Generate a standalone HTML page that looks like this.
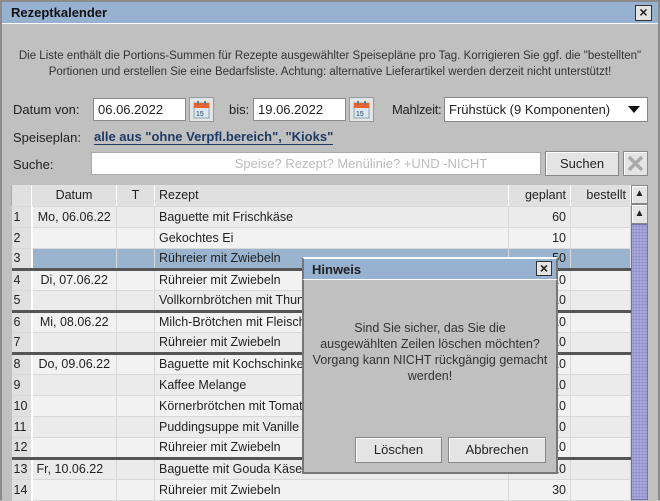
<!DOCTYPE html>
<html><head><meta charset="utf-8"><style>
*{box-sizing:border-box;margin:0;padding:0}
body{width:660px;height:500px;overflow:hidden;background:#c0c0c0;font-family:"Liberation Sans",sans-serif;font-size:13px;color:#222;position:relative}
.a{position:absolute}
.win{left:0;top:0;width:660px;height:500px;border:2px solid #8a8a8a;border-bottom:none}
.title{left:2px;top:2px;width:656px;height:22px;background:#96b2d0;border-bottom:1px solid #fff;font-weight:bold;font-size:13px;line-height:22px;padding-left:9px;color:#111}
.xbtn{width:17px;height:16px;background:#e4e4e4;border:1px solid #333;font-size:14px;line-height:13px;text-align:center;font-weight:bold}
.info{left:0;width:660px;text-align:center;font-size:11.5px;color:#333}
.field{background:#fff;border:1px solid #888;height:23px;line-height:21px;padding-left:4px;font-size:13px}
.lbl{font-size:13px;color:#222}
.cal{width:25px;height:25px;background:#e4e4e4;border:1px solid #999}
.btn{background:#e4e4e4;border:1px solid #888;box-shadow:inset 1px 1px 0 #fff;text-align:center;font-size:13px}
table{border-collapse:collapse;table-layout:fixed;position:absolute;left:11px;top:185px;width:619px}
td{height:21px;border-right:1px solid #d8d8d8;border-bottom:1px solid #d8d8d8;font-size:12.5px;padding:0 4px;white-space:nowrap;overflow:hidden}
tr.h td{background:#e0e0e0;border-right:1px solid #fff;border-left:1px solid #aaa}
td.n{background:#e0e0e0;border-right:2px solid #fff;padding-left:2px}
tr:nth-child(even) td{background:#ebebeb}
tr:nth-child(odd) td{background:#f2f2f2}
tr.h td, tr td.n{background:#e0e0e0}
tr.s td{background:#9ab4d0}
tr.s td.n{background:#e0e0e0}
tr.g td{border-bottom:3px solid #555}
.r{text-align:right}
.c{text-align:center}
</style></head><body>
<div class="a win"></div>
<div class="a title">Rezeptkalender</div>
<div class="a xbtn" style="left:635px;top:5px">×</div>
<div class="a info" style="top:50px">Die Liste enthält die Portions-Summen für Rezepte ausgewählter Speisepläne pro Tag. Korrigieren Sie ggf. die "bestellten"</div>
<div class="a info" style="top:66px">Portionen und erstellen Sie eine Bedarfsliste. Achtung: alternative Lieferartikel werden derzeit nicht unterstützt!</div>

<div class="a lbl" style="left:13px;top:102px">Datum von:</div>
<div class="a field" style="left:93px;top:98px;width:93px">06.06.2022</div>
<div class="a cal" style="left:189px;top:97px"><svg width="23" height="23"><rect x="4" y="5" width="15" height="15" fill="#dde6f0" stroke="#8aa"/><rect x="4" y="5" width="15" height="5" fill="#e8642a"/><rect x="7" y="3" width="2" height="4" fill="#777"/><rect x="14" y="3" width="2" height="4" fill="#777"/><text x="6" y="18" font-size="7" font-family="Liberation Sans" fill="#246">15</text></svg></div>
<div class="a lbl" style="left:229px;top:102px">bis:</div>
<div class="a field" style="left:253px;top:98px;width:93px">19.06.2022</div>
<div class="a cal" style="left:349px;top:97px"><svg width="23" height="23"><rect x="4" y="5" width="15" height="15" fill="#dde6f0" stroke="#8aa"/><rect x="4" y="5" width="15" height="5" fill="#e8642a"/><rect x="7" y="3" width="2" height="4" fill="#777"/><rect x="14" y="3" width="2" height="4" fill="#777"/><text x="6" y="18" font-size="7" font-family="Liberation Sans" fill="#246">15</text></svg></div>
<div class="a lbl" style="left:392px;top:102px;letter-spacing:-0.3px">Mahlzeit:</div>
<div class="a field" style="left:444px;top:97px;width:204px;height:25px;line-height:23px">Frühstück (9 Komponenten)<svg class="a" style="left:183px;top:8px" width="12" height="8"><path d="M0 0H12L6 7Z" fill="#111"/></svg></div>

<div class="a lbl" style="left:13px;top:130px">Speiseplan:</div>
<div class="a" style="left:94px;top:129px;font-weight:bold;color:#1e3a66;font-size:13px;border-bottom:1px solid #1e3a66;line-height:15px">alle aus "ohne Verpfl.bereich", "Kioks"</div>

<div class="a lbl" style="left:13px;top:157px">Suche:</div>
<div class="a field" style="left:91px;top:152px;width:450px;height:23px;border-color:#aaa;color:#bbb;text-align:center;padding-left:90px">Speise? Rezept? Menülinie? +UND -NICHT</div>
<div class="a btn" style="left:545px;top:151px;width:74px;height:25px;line-height:23px">Suchen</div>
<div class="a btn" style="left:623px;top:151px;width:25px;height:25px"><svg width="23" height="23"><path d="M5 5L18 18M18 5L5 18" stroke="#aaa" stroke-width="3.5"/></svg></div>

<table>
<colgroup><col style="width:20px"><col style="width:85px"><col style="width:38px"><col style="width:354px"><col style="width:62px"><col style="width:60px"></colgroup>
<tr class="h"><td></td><td class="c">Datum</td><td class="c">T</td><td>Rezept</td><td class="r">geplant</td><td class="r">bestellt</td></tr>
<tr><td class="n">1</td><td class="c">Mo, 06.06.22</td><td></td><td>Baguette mit Frischkäse</td><td class="r">60</td><td></td></tr>
<tr><td class="n">2</td><td></td><td></td><td>Gekochtes Ei</td><td class="r">10</td><td></td></tr>
<tr class="s g"><td class="n">3</td><td></td><td></td><td>Rühreier mit Zwiebeln</td><td class="r">50</td><td></td></tr>
<tr><td class="n">4</td><td class="c">Di, 07.06.22</td><td></td><td>Rühreier mit Zwiebeln</td><td class="r">10</td><td></td></tr>
<tr class="g"><td class="n">5</td><td></td><td></td><td>Vollkornbrötchen mit Thunfisch</td><td class="r">10</td><td></td></tr>
<tr><td class="n">6</td><td class="c">Mi, 08.06.22</td><td></td><td>Milch-Brötchen mit Fleischkäse</td><td class="r">10</td><td></td></tr>
<tr class="g"><td class="n">7</td><td></td><td></td><td>Rühreier mit Zwiebeln</td><td class="r">10</td><td></td></tr>
<tr><td class="n">8</td><td class="c">Do, 09.06.22</td><td></td><td>Baguette mit Kochschinken</td><td class="r">10</td><td></td></tr>
<tr><td class="n">9</td><td></td><td></td><td>Kaffee Melange</td><td class="r">10</td><td></td></tr>
<tr><td class="n">10</td><td></td><td></td><td>Körnerbrötchen mit Tomate</td><td class="r">10</td><td></td></tr>
<tr><td class="n">11</td><td></td><td></td><td>Puddingsuppe mit Vanille</td><td class="r">10</td><td></td></tr>
<tr class="g"><td class="n">12</td><td></td><td></td><td>Rühreier mit Zwiebeln</td><td class="r">10</td><td></td></tr>
<tr><td class="n">13</td><td>Fr, 10.06.22</td><td></td><td>Baguette mit Gouda Käse</td><td class="r">10</td><td></td></tr>
<tr><td class="n">14</td><td></td><td></td><td>Rühreier mit Zwiebeln</td><td class="r">30</td><td></td></tr>
</table>

<div class="a btn" style="left:631px;top:185px;width:17px;height:19px;font-size:10px;line-height:16px">▲</div>
<div class="a btn" style="left:631px;top:204px;width:17px;height:20px;font-size:10px;line-height:18px">▲</div>
<div class="a" style="left:631px;top:224px;width:17px;height:276px;background:#a8a8dc;border:1px solid #7070b0;background-image:radial-gradient(#8a8ac8 1px,transparent 1px);background-size:3px 3px"></div>

<div class="a" style="left:302px;top:257px;width:256px;height:217px;background:#c0c0c0;border:2px solid #777;border-top:none"></div>
<div class="a" style="left:302px;top:257px;width:256px;height:23px;background:#96b2d0;border-bottom:1px solid #fff;font-weight:bold;line-height:22px;padding-left:8px;font-size:13px;border-left:2px solid #777;border-right:2px solid #777;border-top:2px solid #fff">Hinweis</div>
<div class="a xbtn" style="left:536px;top:261px;width:16px;height:15px">×</div>
<div class="a" style="left:304px;top:320px;width:252px;text-align:center;font-size:12.5px;line-height:16px;color:#333">Sind Sie sicher, das Sie die<br>ausgewählten Zeilen löschen möchten?<br>Vorgang kann NICHT rückgängig gemacht<br>werden!</div>
<div class="a btn" style="left:355px;top:437px;width:87px;height:26px;line-height:24px">Löschen</div>
<div class="a btn" style="left:448px;top:437px;width:98px;height:26px;line-height:24px">Abbrechen</div>
</body></html>
